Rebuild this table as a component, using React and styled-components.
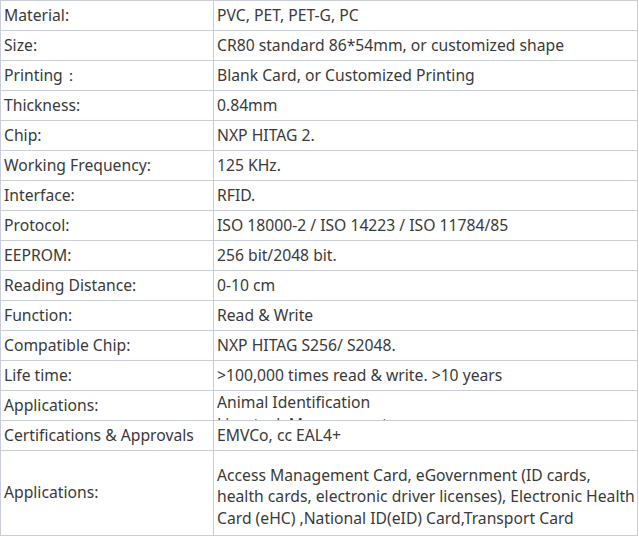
import React from 'react'
import styled, { createGlobalStyle } from 'styled-components'

const GlobalStyle = createGlobalStyle`
  body {
    margin: 0;
    background: #ffffff;
  }
`

const Table = styled.table`
  border-collapse: collapse;
  width: 638px;
  table-layout: fixed;
  font-family: "Noto Sans", "Open Sans", sans-serif;
  font-size: 15.7px;
  color: #3a3a3a;
`

const Row = styled.tr`
  height: ${p => p.$height || 30}px;
`

const Cell = styled.td`
  border: 1px solid #c9cdd8;
  padding: ${p => p.$padTop || 0}px 2px 0 3px;
  line-height: 21.6px;
  vertical-align: ${p => (p.$top ? 'top' : 'middle')};
  white-space: nowrap;
  overflow: hidden;
`

const Clip = styled.div`
  height: 28px;
  padding-top: 1px;
  overflow: hidden;
`

const rows = [
  ['Material:', 'PVC, PET, PET-G, PC'],
  ['Size:', 'CR80 standard 86*54mm, or customized shape'],
  ['Printing：', 'Blank Card, or Customized Printing'],
  ['Thickness:', '0.84mm'],
  ['Chip:', 'NXP HITAG 2.'],
  ['Working Frequency:', '125 KHz.'],
  ['Interface:', 'RFID.'],
  ['Protocol:', 'ISO 18000-2 / ISO 14223 / ISO 11784/85'],
  ['EEPROM:', '256 bit/2048 bit.'],
  ['Reading Distance:', '0-10 cm'],
  ['Function:', 'Read & Write'],
  ['Compatible Chip:', 'NXP HITAG S256/ S2048.'],
  ['Life time:', '>100,000 times read & write. >10 years'],
]

export default function App() {
  return (
    <>
      <GlobalStyle />
      <Table>
        <colgroup>
          <col style={{ width: 213 }} />
          <col />
        </colgroup>
        <tbody>
          {rows.map(([k, v]) => (
            <Row key={k}>
              <Cell>{k}</Cell>
              <Cell>{v}</Cell>
            </Row>
          ))}
          <Row>
            <Cell>Applications:</Cell>
            <Cell $top>
              <Clip>
                Animal Identification
                <br />
                Livestock Management
              </Clip>
            </Cell>
          </Row>
          <Row>
            <Cell>Certifications &amp; Approvals</Cell>
            <Cell>EMVCo, cc EAL4+</Cell>
          </Row>
          <Row $height={85}>
            <Cell>Applications:</Cell>
            <Cell $padTop={8}>
              Access Management Card, eGovernment (ID cards,
              <br />
              health cards, electronic driver licenses), Electronic Health
              <br />
              Card (eHC) ,National ID(eID) Card,Transport Card
            </Cell>
          </Row>
        </tbody>
      </Table>
    </>
  )
}
